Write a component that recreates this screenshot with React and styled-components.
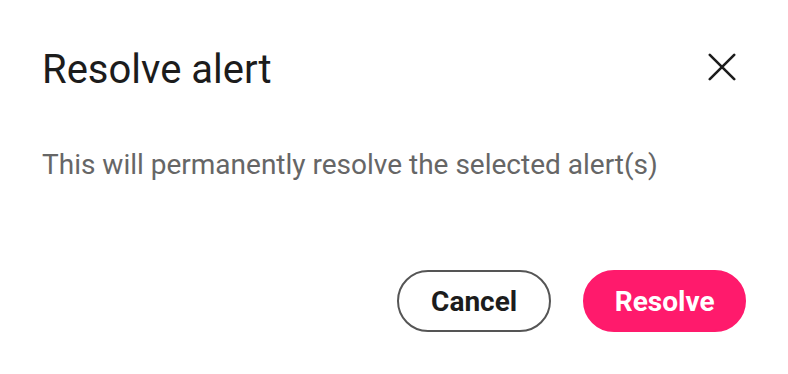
import React from "react";
import styled, { createGlobalStyle } from "styled-components";

const GlobalStyle = createGlobalStyle`
  html, body {
    margin: 0;
    padding: 0;
    background: #ffffff;
  }
  body {
    font-family: Roboto, "Liberation Sans", sans-serif;
  }
`;

const Dialog = styled.div`
  width: 788px;
  height: 374px;
  box-sizing: border-box;
  padding: 46px 42px 0 42px;
  background: #ffffff;
  display: flex;
  flex-direction: column;
`;

const Header = styled.div`
  display: flex;
  justify-content: space-between;
  align-items: center;
`;

const Title = styled.h2`
  margin: 0;
  font-size: 40px;
  font-weight: 400;
  line-height: 48px;
  color: #1c1c1c;
`;

const CloseButton = styled.button`
  border: none;
  background: none;
  padding: 0;
  width: 28px;
  height: 28px;
  margin: 0 10px 6px 0;
  display: flex;
  align-items: center;
  justify-content: center;
  cursor: pointer;
`;

const Message = styled.p`
  margin: 55px 0 0 0;
  font-size: 28px;
  line-height: 32px;
  color: #666666;
`;

const Actions = styled.div`
  display: flex;
  justify-content: flex-end;
  gap: 32px;
  margin-top: 89px;
`;

const PillButton = styled.button`
  height: 62px;
  box-sizing: border-box;
  border-radius: 31px;
  padding: 0 ${(p) => (p.$primary ? "29.5px" : "32px")};
  font-family: Roboto, "Liberation Sans", sans-serif;
  font-size: 28px;
  font-weight: 700;
  border: 2px solid ${(p) => (p.$primary ? "#ff1a6c" : "#555555")};
  background: ${(p) => (p.$primary ? "#ff1a6c" : "#ffffff")};
  color: ${(p) => (p.$primary ? "#ffffff" : "#1c1c1c")};
  cursor: pointer;
`;

const App = () => {
  return (
    <>
      <GlobalStyle />
      <Dialog>
        <Header>
          <Title>Resolve alert</Title>
          <CloseButton aria-label="close">
            <svg width="28" height="28" viewBox="0 0 28 28">
              <path
                d="M1.8 1.8 L26.2 26.2 M26.2 1.8 L1.8 26.2"
                stroke="#1c1c1c"
                strokeWidth="2.6"
                strokeLinecap="round"
              />
            </svg>
          </CloseButton>
        </Header>
        <Message>This will permanently resolve the selected alert(s)</Message>
        <Actions>
          <PillButton>Cancel</PillButton>
          <PillButton $primary>Resolve</PillButton>
        </Actions>
      </Dialog>
    </>
  );
};

export default App;
